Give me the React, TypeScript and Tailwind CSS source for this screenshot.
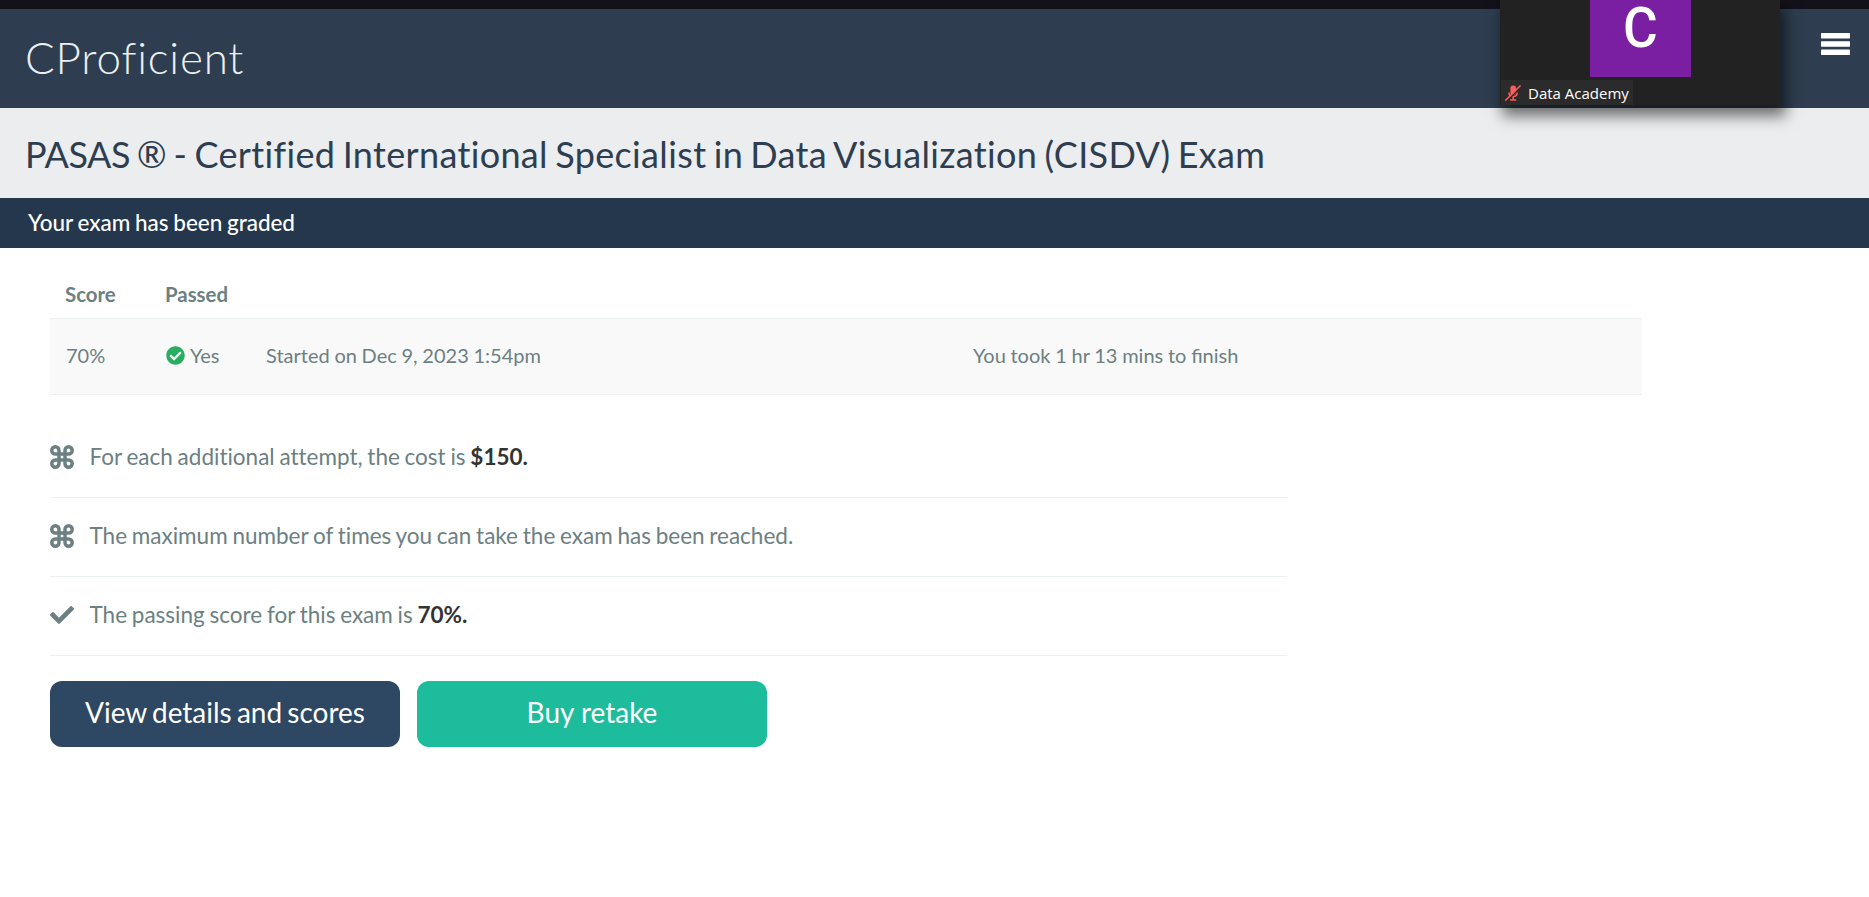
import React from "react";
import { FaCheckCircle, FaCheck } from "react-icons/fa";

function CommandIcon() {
  return (
    <svg viewBox="0 0 24 24" className="size-6" fill="none" stroke="currentColor" strokeWidth="3.5">
      <path d="M9 9V5.4A3.6 3.6 0 1 0 5.4 9H18.6A3.6 3.6 0 1 0 15 5.4V18.6A3.6 3.6 0 1 0 18.6 15H5.4A3.6 3.6 0 1 0 9 18.6Z" />
    </svg>
  );
}

function MutedIcon() {
  return (
    <svg viewBox="0 0 16 16" className="size-4" fill="none" stroke="#fb5f5c">
      <rect x="5.4" y="0.4" width="5.6" height="9.6" rx="2.8" fill="#fb5f5c" stroke="none" />
      <path d="M4 7.4c0 5.4 8.2 5.4 8.2 0M8.1 11.4v3.4M5 15h6.2" strokeWidth="1.5" />
      <path d="M2 16.2L16.4 1.2" stroke="#2b2b2b" strokeWidth="1.6" />
      <path d="M0.3 15.6L15.6 0.4" strokeWidth="1.5" />
    </svg>
  );
}

function MenuIcon() {
  return (
    <svg viewBox="0 0 29 22" className="h-[22px] w-[29px]" fill="#ffffff">
      <rect width="29" height="5.6" rx="0.8" />
      <rect y="8.2" width="29" height="5.6" rx="0.8" />
      <rect y="16.4" width="29" height="5.6" rx="0.8" />
    </svg>
  );
}

function Rule({ icon, children }: { icon: React.ReactNode; children: React.ReactNode }) {
  return (
    <li className="flex h-[79px] items-center border-b border-[#ecf0f1] text-[22.5px]">
      <span className="-mt-px flex w-[39.5px] shrink-0">{icon}</span>
      <span className="-mt-px [font-variant-ligatures:none] whitespace-nowrap [word-spacing:-1px]">{children}</span>
    </li>
  );
}

function CallTile() {
  return (
    <div className="absolute top-0 right-[89px] h-[105px] w-[280px] bg-[#222222] shadow-[4px_9px_14px_2px_rgba(0,0,0,0.55)]">
      <div className="mx-auto flex h-[77px] w-[101px] justify-center bg-[#7b1fa2] font-['Roboto',sans-serif] text-[56px] leading-[56px] font-medium text-white">
        <span className="scale-x-95">C</span>
      </div>
      <div className="mt-[3px] ml-px flex h-[25px] w-[132px] items-center bg-[#2b2b2b] pl-1">
        <MutedIcon />
        <span className="mt-px ml-[7px] font-['Open_Sans',sans-serif] text-[15px] whitespace-nowrap text-white">
          Data Academy
        </span>
      </div>
    </div>
  );
}

export default function App() {
  return (
    <div className="relative h-[897px] overflow-hidden bg-white font-['Lato',sans-serif] text-[#6c8082]">
      <div className="h-[9px] bg-[#13111a]" />
      <header className="flex h-[99px] items-start justify-between bg-[#2e3e50] pr-[19px] pl-[25px]">
        <span className="mt-[15px] text-[44px] leading-[66px] font-light tracking-[0.8px] text-[#ecf0f1]">
          CProficient
        </span>
        <span className="mt-6">
          <MenuIcon />
        </span>
      </header>
      <h1 className="flex h-[90px] items-center bg-[#ebedef] pt-0.5 pl-[25px] text-[36px] whitespace-nowrap text-[#2e3e50]">
        <span className="tracking-[0.35px] [font-variant-ligatures:none] [word-spacing:-2.3px]">
          <span className="tracking-[-0.4px]">PASAS ®</span> - Certified International Specialist in Data Visualization (CISDV) Exam
        </span>
      </h1>
      <p className="flex h-[50px] items-center bg-[#25374d] pl-7 text-[22.5px] font-medium tracking-[-0.05px] text-white [word-spacing:-0.8px]">
        Your exam has been graded
      </p>
      <main className="pl-[50px]">
        <table className="w-[1592px] table-fixed text-left text-[20px]">
          <thead>
            <tr className="h-[70px] border-b border-[#ecf0f1]">
              <th className="w-[100px] pt-6 pl-[15px] text-[20.4px] font-bold">Score</th>
              <th className="w-[101px] pt-6 pl-[15px] text-[20.4px] font-bold">Passed</th>
              <th className="w-[707px]" />
              <th />
            </tr>
          </thead>
          <tbody>
            <tr className="h-[76px] border-b border-[#ecf0f1] bg-[#f9f9f9] [word-spacing:-0.4px]">
              <td className="pb-[2px] pl-4">70%</td>
              <td className="pb-[2px] pl-4">
                <span className="flex items-center gap-[5px]">
                  <FaCheckCircle className="size-[19px] text-[#27ae60]" />
                  Yes
                </span>
              </td>
              <td className="pb-[2px] pl-[15px]">Started on Dec 9, 2023 1:54pm</td>
              <td className="pb-[2px] pl-[15px]">You took 1 hr 13 mins to finish</td>
            </tr>
          </tbody>
        </table>
        <ul className="mt-[24px] w-[1237px]">
          <Rule icon={<CommandIcon />}>
            For each additional attempt, the cost is <b className="text-[#333333]">$150.</b>
          </Rule>
          <Rule icon={<CommandIcon />}>The maximum number of times you can take the exam has been reached.</Rule>
          <Rule icon={<FaCheck className="size-6" />}>
            The passing score for this exam is <b className="text-[#333333]">70%.</b>
          </Rule>
        </ul>
        <div className="mt-[25px] flex gap-[17px] text-[28px] text-white">
          <button className="h-[66px] w-[350px] rounded-[12px] bg-[#2e4762] pb-1 [word-spacing:-2px]">
            View details and scores
          </button>
          <button className="h-[66px] w-[350px] rounded-[12px] bg-[#1cbc9c] pb-1">Buy retake</button>
        </div>
      </main>
      <CallTile />
    </div>
  );
}
